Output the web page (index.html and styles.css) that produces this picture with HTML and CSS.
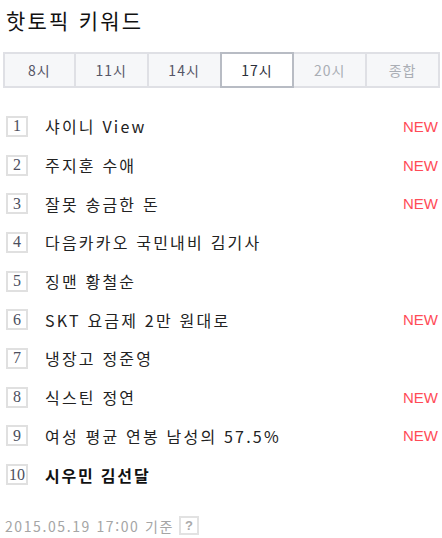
FILE: index.html
```html
<!DOCTYPE html>
<html lang="ko">
<head>
<meta charset="utf-8">
<link rel="stylesheet" href="styles.css">
</head>
<body>
<div class="widget">
  <h1 class="title">핫토픽 키워드</h1>
  <div class="tabs">
    <span class="tab">8시</span>
    <span class="tab">11시</span>
    <span class="tab">14시</span>
    <span class="tab tab-on">17시</span>
    <span class="tab tab-off">20시</span>
    <span class="tab tab-off">종합</span>
  </div>
  <ol class="list">
    <li class="row"><span class="num">1</span><span class="kw">샤이니 View</span><span class="new">NEW</span></li>
    <li class="row"><span class="num">2</span><span class="kw">주지훈 수애</span><span class="new">NEW</span></li>
    <li class="row"><span class="num">3</span><span class="kw">잘못 송금한 돈</span><span class="new">NEW</span></li>
    <li class="row"><span class="num">4</span><span class="kw">다음카카오 국민내비 김기사</span></li>
    <li class="row"><span class="num">5</span><span class="kw">징맨 황철순</span></li>
    <li class="row"><span class="num">6</span><span class="kw">SKT 요금제 2만 원대로</span><span class="new">NEW</span></li>
    <li class="row"><span class="num">7</span><span class="kw">냉장고 정준영</span></li>
    <li class="row"><span class="num">8</span><span class="kw">식스틴 정연</span><span class="new">NEW</span></li>
    <li class="row"><span class="num">9</span><span class="kw">여성 평균 연봉 남성의 57.5%</span><span class="new">NEW</span></li>
    <li class="row"><span class="num">10</span><span class="kw kw-bold">시우민 김선달</span></li>
  </ol>
  <div class="foot"><span>2015.05.19 17:00 기준</span><span class="help">?</span></div>
</div>
</body>
</html>
```

FILE: styles.css
```css
html, body {
  margin: 0;
  padding: 0;
  background: #fff;
}
body {
  font-family: "Noto Sans CJK KR", "Noto Sans", sans-serif;
  color: #222;
}
.widget {
  width: 442px;
  padding: 6px 2px 0 3px;
  box-sizing: border-box;
}
.title {
  margin: 0 0 0 3px;
  font-size: 21px;
  font-weight: normal;
  line-height: 28px;
  letter-spacing: 2.2px;
  color: #111;
}
.tabs {
  margin-top: 18px;
  display: grid;
  grid-template-columns: repeat(6, 1fr);
  height: 36px;
}
.tab {
  display: flex;
  align-items: center;
  justify-content: center;
  border: 2px solid #dfe0e5;
  background: #f6f7f9;
  font-size: 14px;
  letter-spacing: 1px;
  color: #556;
  margin-left: -2px;
  position: relative;
}
.tab:first-child { margin-left: 0; }
.tab-on {
  border-color: #b8bcc4;
  background: #fff;
  color: #2a2f3a;
  z-index: 1;
}
.tab-off { color: #aaaeb5; }
.list {
  list-style: none;
  margin: 19px 0 0 0;
  padding: 0;
}
.row {
  display: flex;
  align-items: center;
  height: 38.7px;
}
.num {
  min-width: 16px;
  height: 17px;
  padding: 0 1px;
  border: 2px solid #e0e0e0;
  margin-left: 3px;
  display: flex;
  align-items: center;
  justify-content: center;
  font-family: "Liberation Serif", "DejaVu Serif", serif;
  font-size: 16px;
  color: #4c4f5e;
  flex-shrink: 0;
}
.kw {
  margin-left: 17px;
  font-size: 16px;
  letter-spacing: 2.2px;
  color: #222;
  flex: 1;
}
.kw-bold { font-weight: bold; color: #111; letter-spacing: 1.8px; }
.new {
  font-family: "Liberation Sans", Arial, sans-serif;
  font-size: 15px;
  color: #ff4c57;
  margin-right: 2px;
}
.foot {
  margin-top: 22px;
  display: flex;
  align-items: center;
  gap: 5px;
  margin-left: 2px;
  font-size: 14px;
  letter-spacing: 1.6px;
  color: #a5a5a5;
}
.help {
  width: 20px;
  height: 19px;
  border: 2px solid #e2e2e2;
  box-sizing: border-box;
  display: flex;
  align-items: center;
  justify-content: center;
  font-family: "Liberation Sans", Arial, sans-serif;
  font-size: 13px;
  font-weight: bold;
  letter-spacing: 0;
  color: #aaa;
}
```
